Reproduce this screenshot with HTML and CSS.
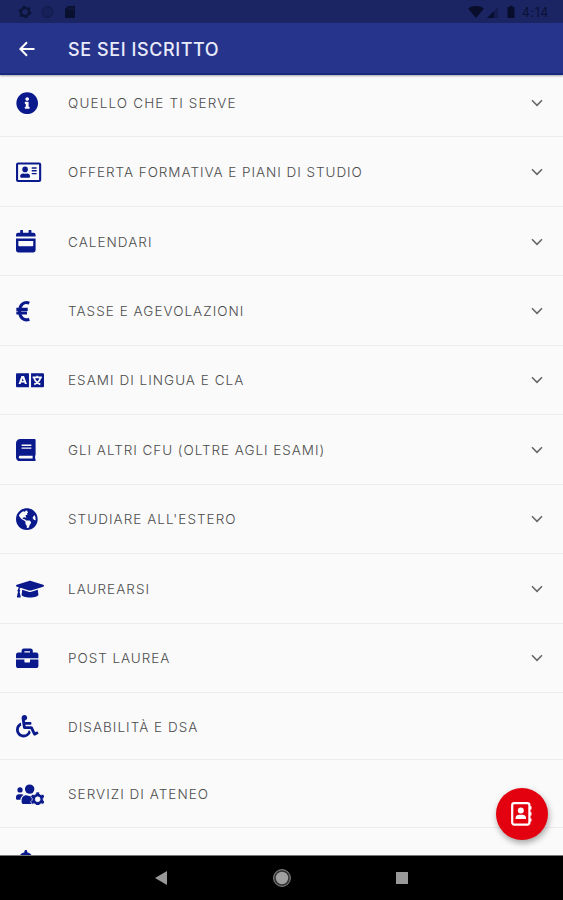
FILE: index.html
```
<!DOCTYPE html>
<html lang="it">
<head>
  <meta charset="UTF-8">
  <title>Se sei iscritto</title>
  <link rel="stylesheet" href="styles.css">
</head>
<body>

  <header class="header">
    <div class="status-bar">
      <svg class="status-left" width="64" height="16" viewBox="0 0 64 16">
        <circle cx="7" cy="8" r="4" fill="none" stroke="#0c1438" stroke-width="2.4"/>
        <circle cx="7" cy="8" r="5.6" fill="none" stroke="#0c1438" stroke-width="1.6" stroke-dasharray="2.6 3.26"/>
        <circle cx="29.500" cy="8" r="5.500" fill="#18205a" stroke="#121a4c" stroke-width="1"/>
        <path d="M47 5l3-3h7v12h-10z" fill="#0a1130"/>
        <path d="M51 3.500v2M53 3.500v2M55 3.500v2" stroke="#1c2564" stroke-width=".7"/>
      </svg>
      <svg class="status-right" width="50" height="16" viewBox="0 0 50 16">
        <path d="M0 4.500C4.500 1.200 11.500 1.200 16 4.500L8 14z" fill="#070d2b"/>
        <path d="M19 14L30 3v11z" fill="#141b4e"/>
        <path d="M19 14l7-7v7z" fill="#080e2e"/>
        <path d="M39.500 3h2V1.800h3V3h2v11h-7z" fill="#070d2b"/>
      </svg>
      <span class="clock">4:14</span>
    </div>
    <div class="toolbar">
      <svg class="back" width="16" height="16" viewBox="0 0 16 16">
        <path d="M15.500 8H2M8 1.300L1.400 8 8 14.700" fill="none" stroke="#fff" stroke-width="2"/>
      </svg>
      <h1 class="title">SE SEI ISCRITTO</h1>
    </div>
  </header>

  <main class="list">
    <div class="row">
      <svg class="icon" viewBox="0 0 640 512"><path d="M256 8C119.043 8 8 119.083 8 256c0 136.997 111.043 248 248 248s248-111.003 248-248C504 119.083 392.957 8 256 8zm0 110c23.196 0 42 18.804 42 42s-18.804 42-42 42-42-18.804-42-42 18.804-42 42-42zm56 254c0 6.627-5.373 12-12 12h-88c-6.627 0-12-5.373-12-12v-24c0-6.627 5.373-12 12-12h12v-64h-12c-6.627 0-12-5.373-12-12v-24c0-6.627 5.373-12 12-12h64c6.627 0 12 5.373 12 12v100h12c6.627 0 12 5.373 12 12v24z"/></svg>
      <span class="label wide">QUELLO CHE TI SERVE</span>
      <svg class="chevron" viewBox="0 0 12 8"><path d="M1 1.300l5 5 5-5"/></svg>
    </div>
    <div class="row">
      <svg class="icon" viewBox="0 0 640 512"><path fill-rule="evenodd" d="M48 32h480a48 48 0 0 1 48 48v352a48 48 0 0 1-48 48H48a48 48 0 0 1-48-48V80a48 48 0 0 1 48-48zm0 48v352h480V80zM208 256a64 64 0 1 0 0-128 64 64 0 1 0 0 128zM96 363v-19c0-32 30-58 67-58 12 0 20 8 45 8s33-8 45-8c37 0 67 26 67 58v19c0 12-10 21-22 21H118c-12 0-22-9-22-21zM360 144h112v32H360zM360 208h112v32H360zM360 272h112v32H360z"/></svg>
      <span class="label tight">OFFERTA FORMATIVA E PIANI DI STUDIO</span>
      <svg class="chevron" viewBox="0 0 12 8"><path d="M1 1.300l5 5 5-5"/></svg>
    </div>
    <div class="row">
      <svg class="icon" viewBox="0 0 640 512"><path fill-rule="evenodd" d="M48 64h48V12a12 12 0 0 1 12-12h40a12 12 0 0 1 12 12v52h128V12a12 12 0 0 1 12-12h40a12 12 0 0 1 12 12v52h48a48 48 0 0 1 48 48v36H0v-36a48 48 0 0 1 48-48zM0 196h448v268a48 48 0 0 1-48 48H48a48 48 0 0 1-48-48zm54 54v104a16 16 0 0 0 16 16h308a16 16 0 0 0 16-16V250z"/></svg>
      <span class="label">CALENDARI</span>
      <svg class="chevron" viewBox="0 0 12 8"><path d="M1 1.300l5 5 5-5"/></svg>
    </div>
    <div class="row">
      <svg class="icon" viewBox="0 0 640 512"><path class="line" d="M304 72C190 22 82 106 82 256s108 234 222 184M8 214h260M8 298h244"/></svg>
      <span class="label">TASSE E AGEVOLAZIONI</span>
      <svg class="chevron" viewBox="0 0 12 8"><path d="M1 1.300l5 5 5-5"/></svg>
    </div>
    <div class="row">
      <svg class="icon" viewBox="0 0 640 512"><path fill-rule="evenodd" d="M24 96h272v320H24a24 24 0 0 1-24-24V120a24 24 0 0 1 24-24zm100 64L58 344h48l12-36h72l12 36h48l-66-184zm30 52l20 60h-40zM344 96h272a24 24 0 0 1 24 24v272a24 24 0 0 1-24 24H344z"/><path class="glyph" d="M380 192h212M486 156v36M414 206c22 70 70 118 142 144M558 206c-22 70-70 118-142 144"/></svg>
      <span class="label">ESAMI DI LINGUA E CLA</span>
      <svg class="chevron" viewBox="0 0 12 8"><path d="M1 1.300l5 5 5-5"/></svg>
    </div>
    <div class="row">
      <svg class="icon" viewBox="0 0 640 512"><path d="M448 360V24c0-13.300-10.700-24-24-24H96C43 0 0 43 0 96v320c0 53 43 96 96 96h328c13.300 0 24-10.700 24-24v-16c0-7.500-3.500-14.300-8.900-18.700-4.200-15.400-4.200-59.300 0-74.700 5.400-4.300 8.900-11.100 8.900-18.600zM128 134c0-3.300 2.700-6 6-6h212c3.300 0 6 2.700 6 6v20c0 3.300-2.700 6-6 6H134c-3.300 0-6-2.700-6-6v-20zm0 64c0-3.300 2.700-6 6-6h212c3.300 0 6 2.700 6 6v20c0 3.300-2.700 6-6 6H134c-3.300 0-6-2.700-6-6v-20zm253.400 250H96c-17.700 0-32-14.300-32-32 0-17.600 14.400-32 32-32h285.400c-1.900 17.100-1.900 46.900 0 64z"/></svg>
      <span class="label tight">GLI ALTRI CFU (OLTRE AGLI ESAMI)</span>
      <svg class="chevron" viewBox="0 0 12 8"><path d="M1 1.300l5 5 5-5"/></svg>
    </div>
    <div class="row">
      <svg class="icon" viewBox="0 0 640 512"><path d="M248 8C111.030 8 0 119.030 0 256s111.030 248 248 248 248-111.030 248-248S384.970 8 248 8zm82.290 357.600c-3.900 3.880-7.990 7.950-11.310 11.280-2.990 3-5.100 6.700-6.170 10.710-1.510 5.660-2.730 11.380-4.770 16.870l-17.390 46.850c-13.760 3-28 4.690-42.650 4.690v-27.380c1.690-12.620-7.640-36.260-22.630-51.250-6-6-9.370-14.140-9.370-22.630v-32.010c0-11.640-6.270-22.340-16.460-27.970-14.370-7.950-34.810-19.060-48.810-26.110-11.480-5.780-22.100-13.140-31.650-21.750l-.8-.72a114.792 114.792 0 0 1-18.060-20.740c-9.380-13.770-24.660-36.420-34.590-51.140 20.470-45.500 57.360-82.040 103.200-101.890l24.010 12.010C203.480 89.740 216 82.010 216 70.110v-11.300c7.990-1.290 16.120-2.110 24.390-2.420l28.300 28.300c6.250 6.250 6.250 16.380 0 22.630L264 112l-10.340 10.340c-3.120 3.120-3.120 8.190 0 11.310l4.690 4.690c3.120 3.120 3.120 8.190 0 11.310l-8 8a8.008 8.008 0 0 1-5.660 2.340h-8.990c-2.080 0-4.080.81-5.580 2.270l-9.920 9.650a8.008 8.008 0 0 0-1.580 9.310l15.590 31.190c2.660 5.320-1.210 11.580-7.150 11.580h-5.640c-1.930 0-3.790-.7-5.240-1.960l-9.280-8.060a16.017 16.017 0 0 0-15.550-3.100l-31.170 10.390a11.950 11.950 0 0 0-8.170 11.340c0 4.530 2.560 8.660 6.610 10.690l11.080 5.540c9.410 4.710 19.790 7.160 30.310 7.160s22.590 27.290 32 32h66.750c8.490 0 16.620 3.370 22.630 9.370l13.690 13.690a30.503 30.503 0 0 1 8.930 21.570 46.536 46.536 0 0 1-13.720 32.980zM417 274.250c-5.790-1.450-10.840-5-14.150-9.970l-17.980-26.970a23.970 23.970 0 0 1 0-26.620l19.590-29.380c2.320-3.470 5.500-6.290 9.240-8.150l12.980-6.490C440.200 193.590 448 223.870 448 256c0 8.670-.74 17.160-1.820 25.540L417 274.250z"/></svg>
      <span class="label">STUDIARE ALL'ESTERO</span>
      <svg class="chevron" viewBox="0 0 12 8"><path d="M1 1.300l5 5 5-5"/></svg>
    </div>
    <div class="row">
      <svg class="icon" viewBox="0 0 640 512"><path d="M622.340 153.200L343.400 67.500c-15.200-4.670-31.600-4.670-46.790 0L17.660 153.200c-23.540 7.230-23.540 38.360 0 45.590l48.630 14.940c-10.670 13.190-17.230 29.280-17.880 46.900C38.780 266.150 32 276.110 32 288c0 10.780 5.680 19.850 13.860 25.650L20.330 428.530C18.110 438.520 25.710 448 35.940 448h56.110c10.240 0 17.840-9.480 15.620-19.470L82.140 313.650C90.320 307.850 96 298.780 96 288c0-11.570-6.470-21.250-15.660-26.870.76-15.020 8.440-28.300 20.690-36.720L296.600 284.500c9.060 2.780 26.440 6.250 46.790 0l278.950-85.700c23.550-7.240 23.550-38.360 0-45.600zM352.790 315.090c-28.530 8.760-52.840 3.920-65.590 0l-145.020-44.550L128 384c0 35.350 85.960 64 192 64s192-28.650 192-64l-14.180-113.470-145.030 44.560z"/></svg>
      <span class="label">LAUREARSI</span>
      <svg class="chevron" viewBox="0 0 12 8"><path d="M1 1.300l5 5 5-5"/></svg>
    </div>
    <div class="row">
      <svg class="icon" viewBox="0 0 640 512"><path d="M320 336c0 8.840-7.160 16-16 16h-96c-8.840 0-16-7.160-16-16v-48H0v144c0 25.600 22.400 48 48 48h416c25.600 0 48-22.400 48-48V288H320v48zm144-208h-80V80c0-25.600-22.400-48-48-48H176c-25.600 0-48 22.400-48 48v48H48c-25.600 0-48 22.400-48 48v80h512v-80c0-25.600-22.400-48-48-48zm-144 0H192V96h128v32z"/></svg>
      <span class="label tight">POST LAUREA</span>
      <svg class="chevron" viewBox="0 0 12 8"><path d="M1 1.300l5 5 5-5"/></svg>
    </div>
    <div class="row short">
      <svg class="icon" viewBox="0 0 640 512"><path d="M496.101 385.669l14.227 28.663c3.929 7.915.697 17.516-7.218 21.445l-65.465 32.886c-16.049 7.967-35.556 1.194-43.189-15.055L331.679 320H192c-15.925 0-29.426-11.710-31.679-27.475C126.433 55.308 128.380 70.044 128 64c0-36.358 30.318-65.635 67.052-63.929 33.271 1.545 60.048 28.905 60.925 62.201.868 32.933-23.152 60.423-54.608 65.039l4.670 32.690H336c8.837 0 16 7.163 16 16v32c0 8.837-7.163 16-16 16H215.182l4.572 32H352a32 32 0 0 1 28.962 18.392L438.477 396.800l36.178-18.349c7.915-3.929 17.517-.697 21.446 7.218zM311.358 352h-24.506c-7.788 54.204-54.528 96-110.852 96-61.757 0-112-50.243-112-112 0-41.505 22.694-77.809 56.324-97.156-3.712-25.965-6.844-47.860-9.488-66.333C45.956 198.464 0 261.963 0 336c0 97.047 78.953 176 176 176 71.870 0 133.806-43.308 161.110-105.192L311.358 352z"/></svg>
      <span class="label">DISABILITÀ E DSA</span>
    </div>
    <div class="row short">
      <svg class="icon" viewBox="0 0 640 512"><circle cx="92" cy="160" r="60"/><circle cx="312" cy="140" r="108"/><path d="M64 256h64c18 0 34 7 45 19-40 22-68 61-74 109H32c-18 0-32-14-32-32v-32c0-35 29-64 64-64zM233 280h8c44 21 94 21 138 0l-8 40 20 56-10 42 44 62H176c-27 0-48-21-48-48v-37c0-64 47-115 105-115z"/><path class="gear" fill-rule="evenodd" d="M462 204h68l12 48 34 19 48-14 34 58-36 36v42l36 36-34 58-48-14-34 19-12 48h-68l-12-48-34-19-48 14-34-58 36-36v-42l-36-36 34-58 48 14 34-19zm34 112a56 56 0 1 0 0 112 56 56 0 1 0 0-112z"/></svg>
      <span class="label">SERVIZI DI ATENEO</span>
    </div>
    <div class="row short">
      <svg class="icon" viewBox="0 0 640 512"><path d="M224 512c35.320 0 63.970-28.650 63.970-64H160.030c0 35.350 28.650 64 63.970 64zm215.390-149.710c-19.320-20.760-55.470-51.990-55.470-154.290 0-77.700-54.480-139.900-127.940-155.160V32c0-17.670-14.320-32-31.980-32s-31.980 14.330-31.980 32v20.840C118.560 68.100 64.080 130.300 64.080 208c0 102.300-36.150 133.530-55.470 154.290-6 6.450-8.660 14.160-8.610 21.710.11 16.400 12.980 32 32.100 32h383.800c19.120 0 32-15.600 32.100-32 .05-7.550-2.610-15.270-8.610-21.710z"/></svg>
    </div>
  </main>

  <div class="fab">
    <svg width="24" height="24" viewBox="0 0 24 24">
      <rect x="2.200" y="1.200" width="17.200" height="21.400" rx="2" fill="none" stroke="#fff" stroke-width="2.200"/>
      <path d="M19 4.200h2.500v3.200H19zM19 10.200h2.500v3.400H19zM19 16.400h2.500v3.200H19z" fill="#fff"/>
      <circle cx="10.800" cy="8.500" r="3" fill="#fff"/>
      <path d="M5.600 17v-1.200c0-2 1.700-3.100 3.600-3.100h3.200c1.900 0 3.600 1.100 3.600 3.100V17z" fill="#fff"/>
    </svg>
  </div>

  <footer class="nav-bar">
    <svg width="14" height="16" viewBox="0 0 14 16"><path d="M1 8l12-7v14z" fill="#999"/></svg>
    <svg width="20" height="20" viewBox="0 0 20 20"><circle cx="10" cy="10" r="8.400" fill="#333" stroke="#888" stroke-width="1"/><circle cx="10" cy="10" r="6.200" fill="#a0a0a0"/></svg>
    <svg width="14" height="14" viewBox="0 0 14 14"><rect x="1" y="1" width="12" height="12" fill="#999"/></svg>
  </footer>

</body>
</html>
```
FILE: styles.css
```
* {
  margin: 0;
  padding: 0;
  box-sizing: border-box;
}

body {
  height: 900px;
  display: flex;
  flex-direction: column;
  overflow: hidden;
  background: #fafafa;
  font-family: Inter, "Liberation Sans", sans-serif;
}

/* Header */
.header {
  position: relative;
  z-index: 1;
  flex: none;
  height: 75px;
  background: #27348b;
  border-bottom: 2px solid #17297f;
  box-shadow: 0 1px 2px rgba(0, 0, 0, 0.35);
}

.status-bar {
  height: 23px;
  padding: 0 12px 0 18px;
  display: flex;
  align-items: center;
  background: #1c2564;
}

.status-left {
  margin-top: 1px;
}

.status-right {
  margin-left: auto;
  margin-right: 4px;
}

.clock {
  width: 29px;
  font-size: 12.5px;
  letter-spacing: 0.5px;
  color: #0a1134;
  white-space: nowrap;
  margin-top: 2px;
}

.toolbar {
  height: 52px;
  padding-left: 19px;
  display: flex;
  align-items: center;
}

.title {
  margin-left: 33px;
  padding-top: 1px;
  font-size: 18px;
  font-weight: 500;
  letter-spacing: 0.58px;
  color: #e9ebfb;
}

/* List */
.list {
  flex: 1;
  min-height: 0;
  overflow: hidden;
}

.row {
  height: 69.45px;
  padding: 1px 20.5px 0 15.5px;
  display: flex;
  align-items: center;
  border-bottom: 1px solid #ededed;
}

/* the list is scrolled down a little */
.row:first-child {
  margin-top: -7px;
}

.row.short {
  height: 67.5px;
}

.icon {
  flex: none;
  width: 28px;
  height: 22.4px;
  margin-right: 24.5px;
  fill: #0a1a8c;
}

.icon .line {
  fill: none;
  stroke: #0a1a8c;
  stroke-width: 70;
}

.icon .glyph {
  fill: none;
  stroke: #fafafa;
  stroke-width: 40;
}

.icon .gear {
  stroke: #fafafa;
  stroke-width: 16;
}

.label {
  flex: 1;
  font-size: 13.5px;
  font-weight: 300;
  letter-spacing: 1.04px;
  white-space: nowrap;
  color: #4c4c4c;
}

.label.wide {
  letter-spacing: 1.15px;
}

.label.tight {
  letter-spacing: 0.96px;
}

.chevron {
  width: 12px;
  height: 8px;
  fill: none;
  stroke: #666;
  stroke-width: 1.6;
}

/* Contacts button */
.fab {
  position: fixed;
  z-index: 2;
  left: 496px;
  top: 788px;
  width: 52px;
  height: 52px;
  border-radius: 50%;
  display: flex;
  align-items: center;
  justify-content: center;
  background: #e3000f;
  box-shadow: 1px 3px 6px rgba(0, 0, 0, 0.35);
}

/* Android navigation */
.nav-bar {
  flex: none;
  height: 45px;
  padding: 0 154px 1px;
  display: flex;
  align-items: center;
  justify-content: space-between;
  background: #000;
  border-top: 1px solid #777;
}
```
